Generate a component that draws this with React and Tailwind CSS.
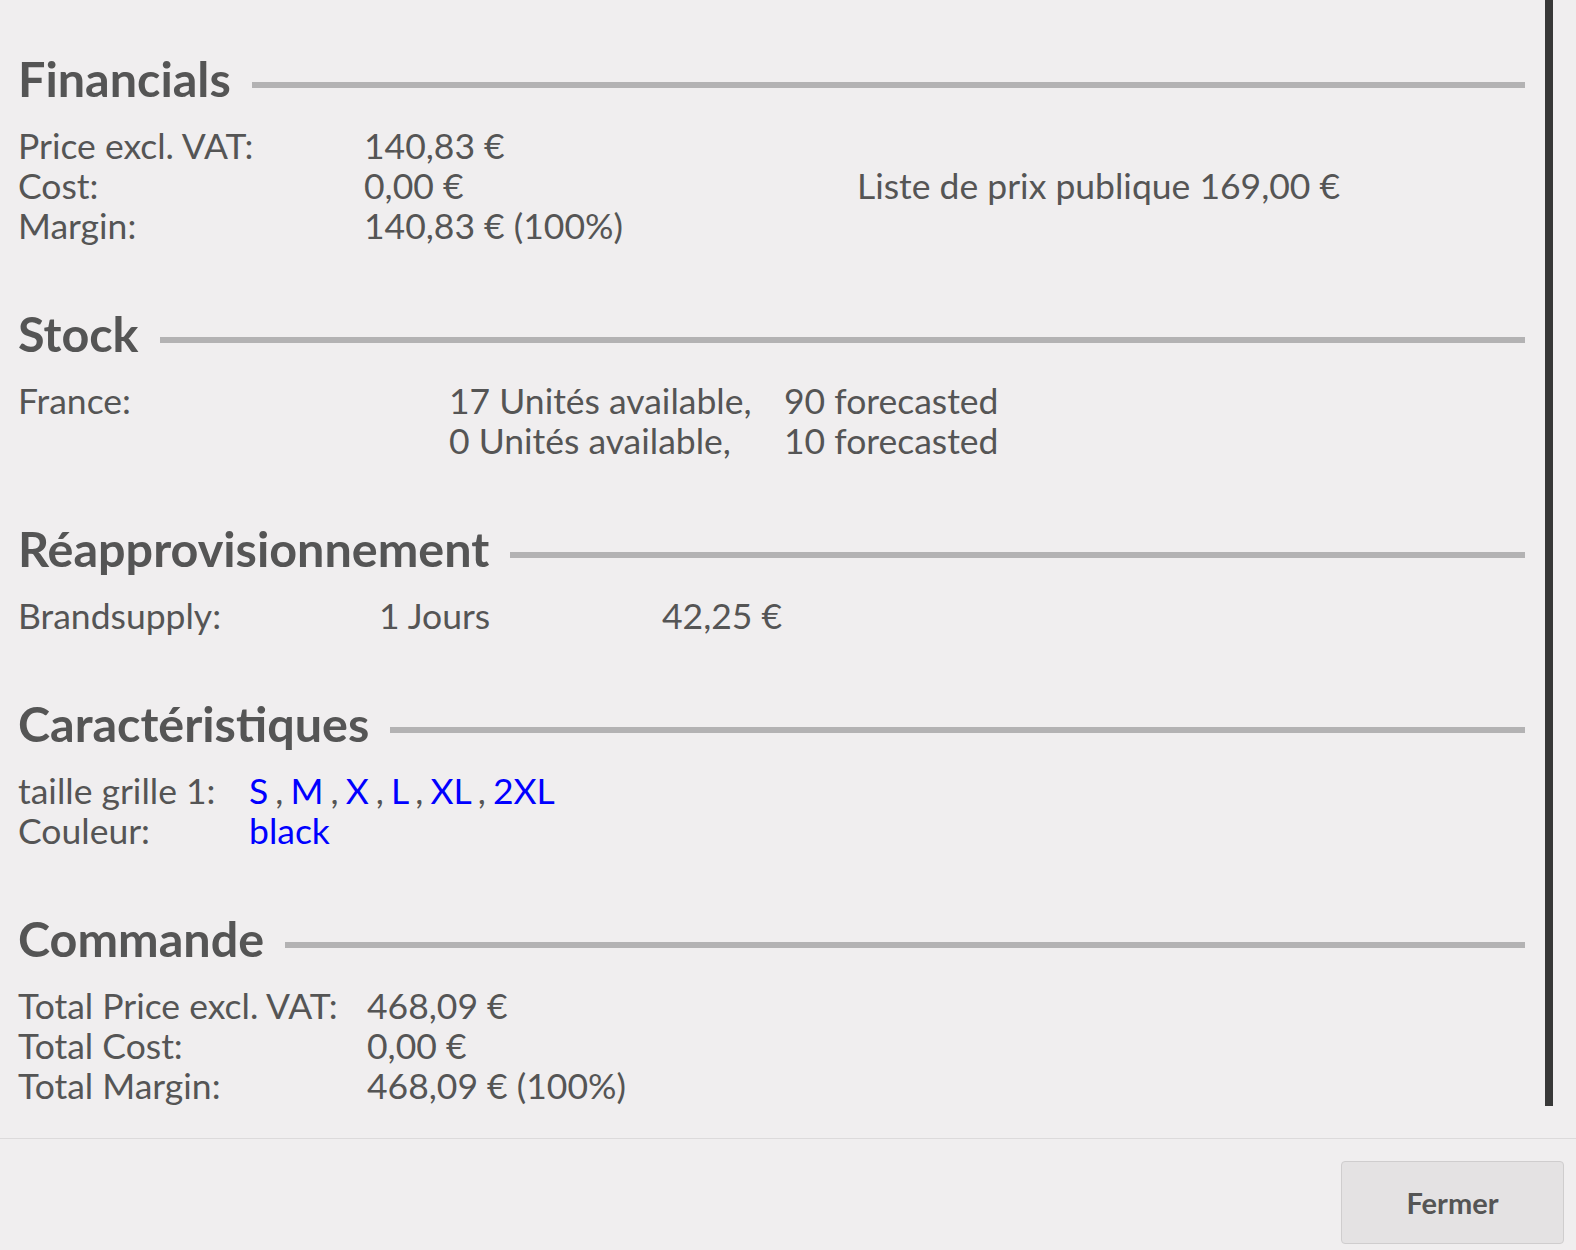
import React from "react";

const font = { fontFamily: "Lato, 'Noto Sans', sans-serif" };

function Heading({ children }) {
  return (
    <div className="flex items-start gap-[21px] h-[58px] mb-[19px]">
      <h4 className="text-[48.5px] leading-[58px] font-bold text-[#555555] whitespace-nowrap">{children}</h4>
      <div className="flex-1 h-[6px] mt-[33px] bg-[#b3b2b3]" />
    </div>
  );
}

const Blue = ({ children }) => <a className="text-[#0000ff]">{children}</a>;

export default function App() {
  return (
    <div className="w-[1576px] h-[1250px] bg-[#f0eeef] text-[#555555] overflow-hidden" style={font}>
      <div className="flex h-[1138px]">
        <div className="flex-1 pl-[18px] pr-[20px] text-[35.5px] leading-[40px]">
          <section className="pt-[49px]">
            <Heading>Financials</Heading>
            <div className="flex">
              <div className="w-[346px] shrink-0">
                <div>Price excl. VAT:</div>
                <div>Cost:</div>
                <div>Margin:</div>
              </div>
              <div className="w-[493px] shrink-0">
                <div>140,83 €</div>
                <div>0,00 €</div>
                <div>140,83 € (100%)</div>
              </div>
              <div>
                <div>&nbsp;</div>
                <div className="whitespace-nowrap">Liste de prix publique 169,00 €</div>
              </div>
            </div>
          </section>

          <section className="mt-[58px]">
            <Heading>Stock</Heading>
            <div className="flex">
              <div className="w-[431px] shrink-0">France:</div>
              <div>
                <div className="flex">
                  <span className="w-[335px] shrink-0">17 Unités available,</span>
                  <span>90 forecasted</span>
                </div>
                <div className="flex">
                  <span className="w-[335px] shrink-0">0 Unités available,</span>
                  <span>10 forecasted</span>
                </div>
              </div>
            </div>
          </section>

          <section className="mt-[58px]">
            <Heading>Réapprovisionnement</Heading>
            <div className="flex">
              <div className="w-[361px] shrink-0">Brandsupply:</div>
              <div className="w-[283px] shrink-0">1 Jours</div>
              <div>42,25 €</div>
            </div>
          </section>

          <section className="mt-[58px]">
            <Heading>Caractéristiques</Heading>
            <div className="flex">
              <div className="w-[231px] shrink-0">
                <div>taille grille 1:</div>
                <div>Couleur:</div>
              </div>
              <div>
                <div className="[word-spacing:-2px]">
                  <Blue>S</Blue> , <Blue>M</Blue> , <Blue>X</Blue> , <Blue>L</Blue> , <Blue>XL</Blue> , <Blue>2XL</Blue>
                </div>
                <div>
                  <Blue>black</Blue>
                </div>
              </div>
            </div>
          </section>

          <section className="mt-[58px]">
            <Heading>Commande</Heading>
            <div className="flex">
              <div className="w-[349px] shrink-0">
                <div>Total Price excl. VAT:</div>
                <div>Total Cost:</div>
                <div>Total Margin:</div>
              </div>
              <div>
                <div>468,09 €</div>
                <div>0,00 €</div>
                <div>468,09 € (100%)</div>
              </div>
            </div>
          </section>
        </div>
        <div className="w-[8px] mr-[23px]">
          <div className="h-[1106px] bg-[#383838]" />
        </div>
      </div>
      <div className="border-t border-[#dcdadb] flex justify-end pt-[22px] pr-[12px]">
        <button className="w-[223px] h-[83px] bg-[#e4e2e3] border border-[#cfcdce] rounded-[4px] text-[29px] font-bold text-[#555555]">
          Fermer
        </button>
      </div>
    </div>
  );
}
